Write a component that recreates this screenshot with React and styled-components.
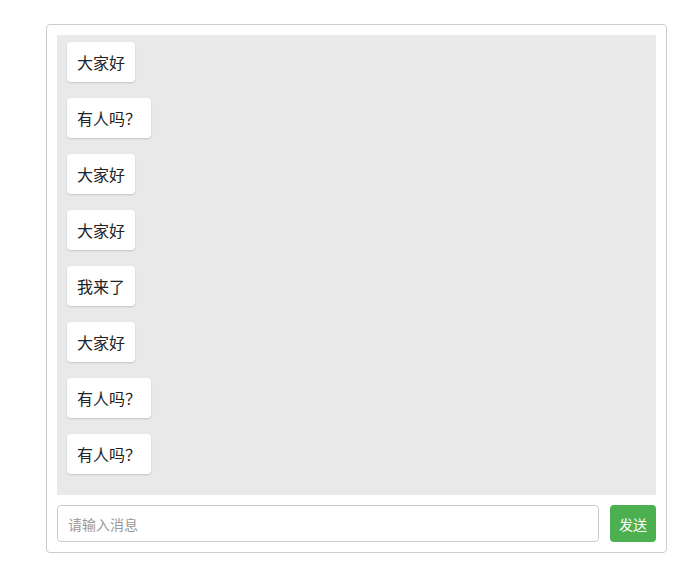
import React from "react";
import styled, { createGlobalStyle } from "styled-components";

const GlobalStyle = createGlobalStyle`
  body {
    margin: 0;
    background: #fff;
    font-family: "Microsoft YaHei", "Noto Sans CJK SC", sans-serif;
  }
`;

const Page = styled.div`
  padding: 24px 0 0 46px;
`;

const ChatBox = styled.div`
  width: 599px;
  padding: 10px;
  border: 1px solid #ccc;
  border-radius: 4px;
  display: flex;
  flex-direction: column;
  gap: 10px;
`;

const MessageList = styled.div`
  height: 460px;
  box-sizing: border-box;
  padding: 7px 10px;
  background: #e9e9e9;
  display: flex;
  flex-direction: column;
  align-items: flex-start;
  gap: 16px;
  overflow: hidden;
`;

const Bubble = styled.div`
  background: #fff;
  padding: 10px;
  font-size: 16px;
  line-height: 20px;
  color: #222;
  border-radius: 4px;
  box-shadow: 0 1px 2px rgba(0, 0, 0, 0.15);
`;

const InputRow = styled.div`
  display: flex;
  gap: 11px;
`;

const Input = styled.input`
  flex: 1;
  height: 37px;
  box-sizing: border-box;
  padding: 0 10px;
  border: 1px solid #ccc;
  border-radius: 4px;
  font-family: inherit;
  font-size: 14px;
  outline: none;
  &::placeholder {
    color: #999;
  }
`;

const SendButton = styled.button`
  width: 46px;
  height: 37px;
  border: none;
  border-radius: 4px;
  background: #4caf50;
  color: #fff;
  font-family: inherit;
  font-size: 14px;
  padding: 0;
`;

const messages = ["大家好", "有人吗？", "大家好", "大家好", "我来了", "大家好", "有人吗？", "有人吗？"];

const App = () => {
  return (
    <>
      <GlobalStyle />
      <Page>
        <ChatBox>
          <MessageList>
            {messages.map((m, i) => (
              <Bubble key={i}>{m}</Bubble>
            ))}
          </MessageList>
          <InputRow>
            <Input placeholder="请输入消息" />
            <SendButton>发送</SendButton>
          </InputRow>
        </ChatBox>
      </Page>
    </>
  );
};

export default App;
